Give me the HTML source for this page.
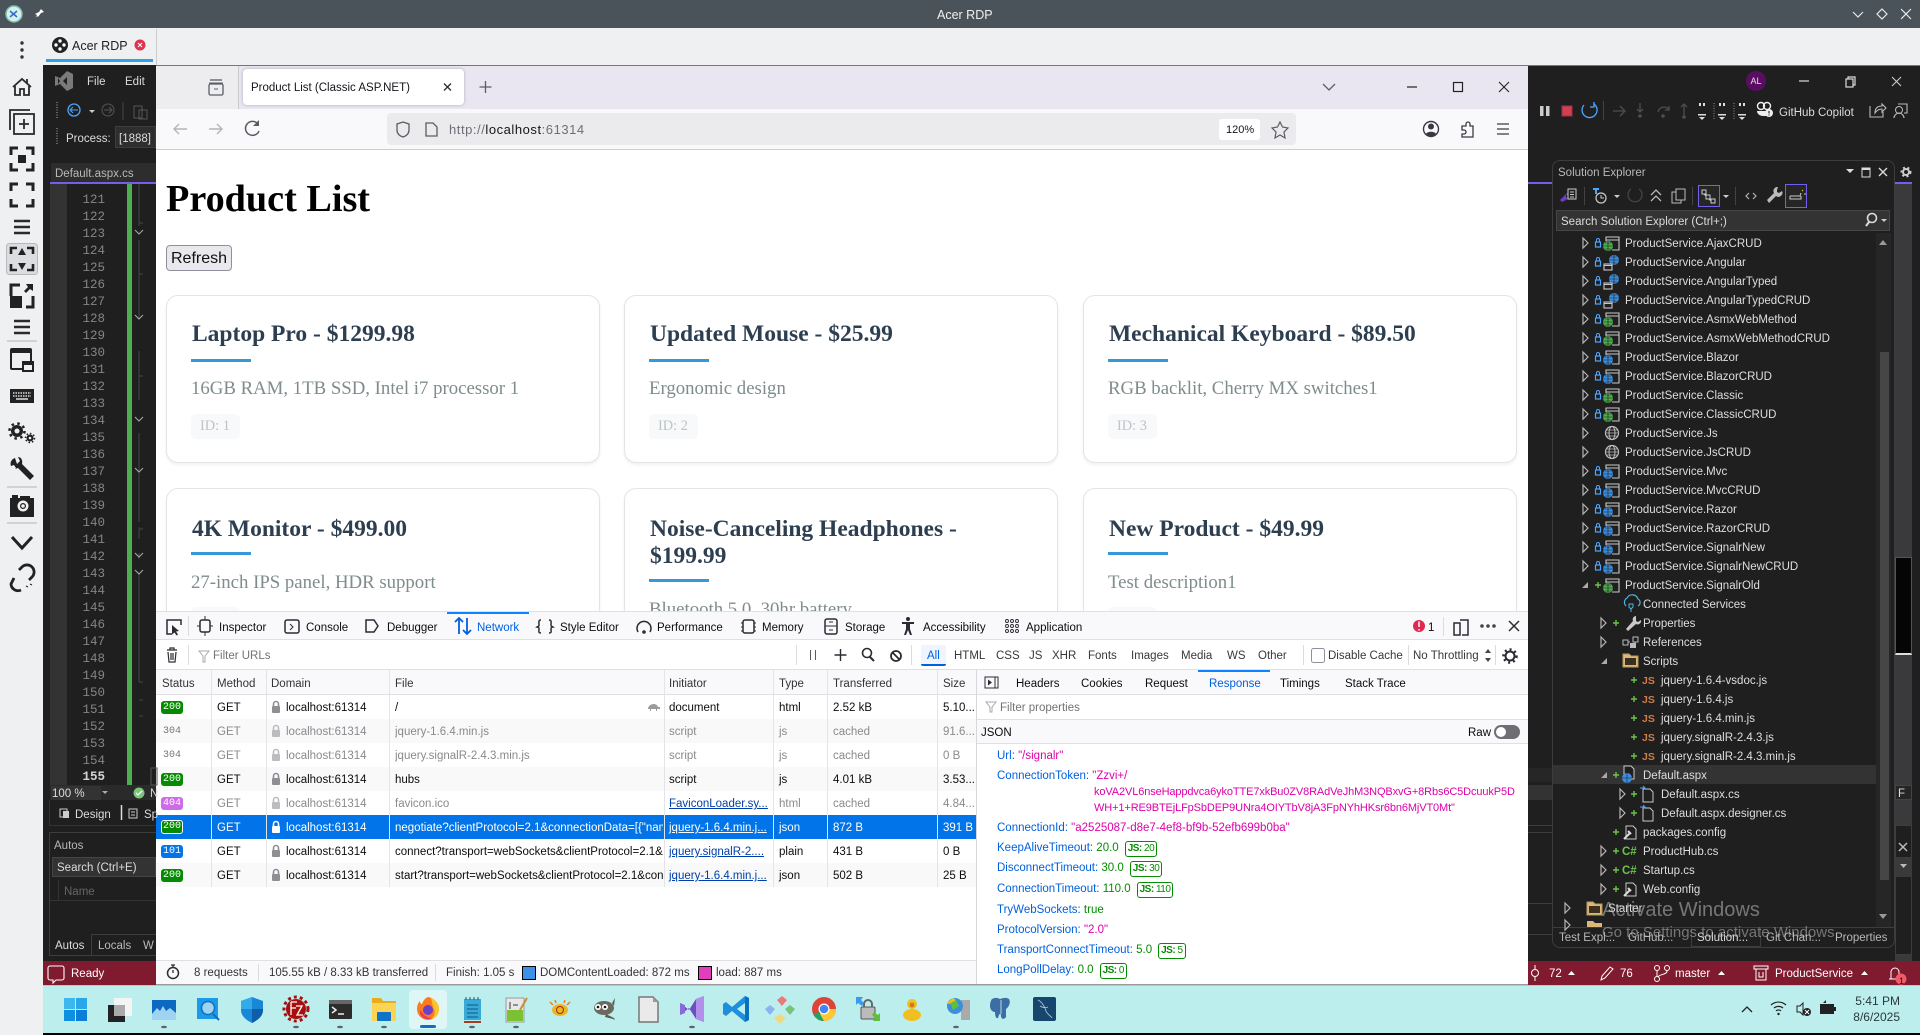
<!DOCTYPE html>
<html><head><meta charset="utf-8"><title>Acer RDP</title>
<style>
*{box-sizing:border-box}
html,body{margin:0;padding:0;width:1920px;height:1035px;overflow:hidden;background:#eff0f2;font-family:"Liberation Sans",sans-serif}
.b{position:absolute}
.t{position:absolute;white-space:nowrap;transform:translateY(-7px);line-height:16px;font-size:11.5px;color:#0c0c0d}
.d{color:#b8b8b8}.w{color:#dcdcdc}
.n{position:absolute;left:75px;width:30px;text-align:right;font:12.5px/17px "Liberation Mono",monospace;color:#858585;margin-top:1px}
.card{position:absolute;width:434px;background:#fff;border:1.2px solid #e4e4e4;border-radius:12px;box-shadow:0 2px 3px rgba(0,0,0,.06)}
.ct{position:absolute;left:25px;right:25px;font:bold 23.5px/26.6px "Liberation Serif",serif;color:#2c3e50}
.cb{position:absolute;left:24px;width:60px;height:3px;background:#3498db}
.cd{position:absolute;left:24px;font:18.8px/23px "Liberation Serif",serif;color:#7f8c8d;white-space:nowrap}
.ci{position:absolute;left:24px;width:49px;height:25px;background:#f8f9fa;border-radius:5px;font:14.4px/25px "Liberation Serif",serif;color:#bdc3c7;padding-left:9px}
.g{color:#8a8a8e}.u{color:#003eaa;text-decoration:underline}
.k{color:#0060df}.v{color:#dd00a9}.e{color:#058b00}
.st{position:absolute;left:161px;width:22px;height:13px;border-radius:3px;color:#fff;font:10px/13px "Liberation Mono",monospace;text-align:center}
.bd{display:inline-block;border:1px solid #058b00;border-radius:3px;padding:0 2px;font-size:10px;line-height:14px;margin-left:6px;color:#058b00;letter-spacing:-.5px}
.f{overflow:hidden;width:268px}
.r{color:#dedede}
</style></head><body>

<!-- window chrome -->
<div class="b" style="left:0;top:0;width:1920px;height:28px;background:#4a525a"></div>
<div class="b" style="left:43px;top:28px;width:1877px;height:37px;background:#eff0f2"></div>
<div class="b" style="left:46px;top:59px;width:107px;height:3px;background:#2ea3e6"></div>
<div class="b" style="left:156px;top:29px;width:1px;height:36px;background:#ccc"></div>

<!-- VS dark -->
<div class="b" style="left:43px;top:65px;width:1877px;height:921px;background:#1f1f1f"></div>
<div class="b" style="left:43px;top:961px;width:1877px;height:24px;background:#7f1a2f"></div>
<div class="b" style="left:156px;top:65px;width:1764px;height:1px;background:#777"></div>
<!-- left editor -->
<div class="b" style="left:51px;top:163px;width:105px;height:19px;background:#2d2d2d"></div>
<div class="b" style="left:50px;top:182px;width:106px;height:2px;background:#7160e8"></div>
<div class="b" style="left:50px;top:184px;width:17px;height:601px;background:#333"></div>
<div class="b" style="left:127px;top:184px;width:5px;height:601px;background:#4caf50"></div>
<div class="b" style="left:115px;top:126px;width:41px;height:22px;background:#2e2e2e;border:1px solid #3d3d3d"></div>
<div class="b" style="left:50px;top:785px;width:106px;height:15px;background:#2a2a2a"></div>
<div class="b" style="left:51px;top:786px;width:50px;height:14px;background:#333"></div>
<div class="b" style="left:49px;top:800px;width:108px;height:26px;border:1px solid #333;border-top:0"></div>
<div class="b" style="left:49px;top:832px;width:108px;height:124px;border:1px solid #3d3d3d"></div>
<div class="b" style="left:52px;top:857px;width:104px;height:20px;background:#333;border:1px solid #444"></div>
<div class="b" style="left:58px;top:880px;width:1px;height:20px;background:#333"></div>
<div class="b" style="left:50px;top:900px;width:106px;height:1px;background:#333"></div>
<div class="b" style="left:91px;top:934px;width:65px;height:1px;background:#3d3d3d"></div>
<div class="b" style="left:91px;top:934px;width:1px;height:21px;background:#3d3d3d"></div>

<!-- line numbers -->
<div class="n" style="top:191px">121</div><div class="n" style="top:208px">122</div><div class="n" style="top:225px">123</div><div class="n" style="top:242px">124</div><div class="n" style="top:259px">125</div><div class="n" style="top:276px">126</div><div class="n" style="top:293px">127</div><div class="n" style="top:310px">128</div><div class="n" style="top:327px">129</div><div class="n" style="top:344px">130</div><div class="n" style="top:361px">131</div><div class="n" style="top:378px">132</div><div class="n" style="top:395px">133</div><div class="n" style="top:412px">134</div><div class="n" style="top:429px">135</div><div class="n" style="top:446px">136</div><div class="n" style="top:463px">137</div><div class="n" style="top:480px">138</div><div class="n" style="top:497px">139</div><div class="n" style="top:514px">140</div><div class="n" style="top:531px">141</div><div class="n" style="top:548px">142</div><div class="n" style="top:565px">143</div><div class="n" style="top:582px">144</div><div class="n" style="top:599px">145</div><div class="n" style="top:616px">146</div><div class="n" style="top:633px">147</div><div class="n" style="top:650px">148</div><div class="n" style="top:667px">149</div><div class="n" style="top:684px">150</div><div class="n" style="top:701px">151</div><div class="n" style="top:718px">152</div><div class="n" style="top:735px">153</div><div class="n" style="top:752px">154</div><div class="n" style="top:768px;color:#d4d4d4;font-weight:bold">155</div>

<!-- firefox -->
<div class="b" style="left:156px;top:66px;width:1372px;height:43px;background:#e9e6f1"></div>
<div class="b" style="left:156px;top:66px;width:82px;height:43px;background:#ededf0"></div>
<div class="b" style="left:238px;top:66px;width:1px;height:43px;background:#c9c9cf"></div>
<div class="b" style="left:243px;top:69px;width:221px;height:36px;background:#fff;border-radius:4px;box-shadow:0 0 3px rgba(0,0,0,.25)"></div>
<div class="b" style="left:156px;top:109px;width:1372px;height:41px;background:#f9f9fb;border-bottom:1px solid #ccc"></div>
<div class="b" style="left:387px;top:113px;width:909px;height:32px;background:#ebebed;border-radius:4px"></div>
<div class="b" style="left:1219px;top:119px;width:41px;height:21px;background:#fff;border-radius:3px"></div>
<div class="b" style="left:156px;top:150px;width:1372px;height:835px;background:#fff"></div>

<div class="t" style="left:166px;top:199px;font:bold 38.2px/44px 'Liberation Serif',serif;color:#000;transform:translateY(-50%)">Product List</div>
<div class="b" style="left:166px;top:245px;width:66px;height:26px;background:#e9e9ed;border:1px solid #8f8f9d;border-radius:4px;font-size:16px;line-height:24px;padding-top:1px;text-align:center;color:#111">Refresh</div>

<div class="card" style="left:166px;top:295px;height:168px"><div class="ct" style="top:25px">Laptop Pro - $1299.98</div><div class="cb" style="top:63px"></div><div class="cd" style="top:81px">16GB RAM, 1TB SSD, Intel i7 processor 1</div><div class="ci" style="top:118px">ID: 1</div></div>
<div class="card" style="left:624px;top:295px;height:168px"><div class="ct" style="top:25px">Updated Mouse - $25.99</div><div class="cb" style="top:63px"></div><div class="cd" style="top:81px">Ergonomic design</div><div class="ci" style="top:118px">ID: 2</div></div>
<div class="card" style="left:1083px;top:295px;height:168px"><div class="ct" style="top:25px">Mechanical Keyboard - $89.50</div><div class="cb" style="top:63px"></div><div class="cd" style="top:81px">RGB backlit, Cherry MX switches1</div><div class="ci" style="top:118px">ID: 3</div></div>
<div class="card" style="left:166px;top:488px;height:168px"><div class="ct" style="top:27px">4K Monitor - $499.00</div><div class="cb" style="top:63px"></div><div class="cd" style="top:82px">27-inch IPS panel, HDR support</div><div class="ci" style="top:118px">ID: 4</div></div>
<div class="card" style="left:624px;top:488px;height:200px"><div class="ct" style="top:27px">Noise-Canceling Headphones - $199.99</div><div class="cb" style="top:90px"></div><div class="cd" style="top:109px">Bluetooth 5.0, 30hr battery</div></div>
<div class="card" style="left:1083px;top:488px;height:168px"><div class="ct" style="top:27px">New Product - $49.99</div><div class="cb" style="top:63px"></div><div class="cd" style="top:82px">Test description1</div><div class="ci" style="top:118px">ID: 6</div></div>

<!-- devtools backgrounds -->
<div class="b" style="left:156px;top:611px;width:1372px;height:374px;background:#fff;border-top:1px solid #e0e0e2"></div>
<div class="b" style="left:156px;top:612px;width:1372px;height:28px;background:#f9f9fb;border-bottom:1px solid #e0e0e2"></div>
<div class="b" style="left:156px;top:640px;width:1372px;height:30px;background:#fff;border-bottom:1px solid #e0e0e2"></div>
<div class="b" style="left:156px;top:670px;width:1372px;height:25px;background:#f9f9fb;border-bottom:1px solid #e0e0e2"></div>
<div class="b" style="left:447px;top:612px;width:82px;height:2px;background:#0a84ff"></div>
<div class="b" style="left:921px;top:645px;width:25px;height:21px;background:#eef5fe;border-bottom:2px solid #0060df;border-radius:2px"></div>
<div class="b" style="left:1198px;top:670px;width:72px;height:2px;background:#0a84ff"></div>
<!-- table rows -->
<div class="b" style="left:156px;top:719px;width:820px;height:24px;background:#f9f9fa"></div>
<div class="b" style="left:156px;top:767px;width:820px;height:24px;background:#f9f9fa"></div>
<div class="b" style="left:156px;top:863px;width:820px;height:24px;background:#f9f9fa"></div>
<div class="b" style="left:156px;top:815px;width:820px;height:24px;background:#0074e8"></div>
<div class="b" style="left:211px;top:670px;width:1px;height:217px;background:#e4e4e6"></div>
<div class="b" style="left:266px;top:670px;width:1px;height:217px;background:#e4e4e6"></div>
<div class="b" style="left:389px;top:670px;width:1px;height:217px;background:#e4e4e6"></div>
<div class="b" style="left:664px;top:670px;width:1px;height:217px;background:#e4e4e6"></div>
<div class="b" style="left:773px;top:670px;width:1px;height:217px;background:#e4e4e6"></div>
<div class="b" style="left:827px;top:670px;width:1px;height:217px;background:#e4e4e6"></div>
<div class="b" style="left:937px;top:670px;width:1px;height:217px;background:#e4e4e6"></div>
<div class="b" style="left:976px;top:670px;width:1px;height:315px;background:#d8d8da"></div>
<div class="b" style="left:977px;top:719px;width:551px;height:25px;background:#f9f9fb;border-top:1px solid #e0e0e2;border-bottom:1px solid #e0e0e2"></div>
<div class="b" style="left:156px;top:960px;width:820px;height:25px;background:#f9f9fb;border-top:1px solid #e0e0e2"></div>
<div class="b" style="left:156px;top:984px;width:1372px;height:2px;background:#999"></div>
<div class="b" style="left:522px;top:966px;width:14px;height:14px;background:#3c90e8;border:1px solid #000"></div>
<div class="b" style="left:698px;top:966px;width:14px;height:14px;background:#e23dbb;border:1px solid #000"></div>

<!-- solution explorer backgrounds -->
<div class="b" style="left:1528px;top:182px;width:24px;height:2px;background:#7160e8"></div>
<div class="b" style="left:1895px;top:182px;width:17px;height:2px;background:#7160e8"></div>
<div class="b" style="left:1895px;top:184px;width:17px;height:777px;background:#3a3a3d"></div>
<div class="b" style="left:1895px;top:557px;width:17px;height:98px;background:#050505;border:1px solid #555;border-bottom:2px solid #ddd"></div>
<div class="b" style="left:1528px;top:768px;width:24px;height:14px;background:#262626"></div>
<div class="b" style="left:1528px;top:785px;width:24px;height:15px;background:#333"></div>
<div class="b" style="left:1895px;top:785px;width:17px;height:15px;background:#252525;border:1px solid #444"></div>
<div class="b" style="left:1528px;top:825px;width:24px;height:1px;background:#3d3d3d"></div>
<div class="b" style="left:1528px;top:832px;width:24px;height:1px;background:#3d3d3d"></div>
<div class="b" style="left:1528px;top:903px;width:24px;height:1px;background:#3d3d3d"></div>
<div class="b" style="left:1528px;top:934px;width:24px;height:1px;background:#3d3d3d"></div>
<div class="b" style="left:1895px;top:825px;width:17px;height:130px;background:#1f1f1f;border:1px solid #3d3d3d"></div>
<div class="b" style="left:1895px;top:857px;width:17px;height:20px;background:#3a3a3a"></div>
<div class="b" style="left:1552px;top:160px;width:343px;height:788px;background:#1f1f1f;border:1px solid #3d3d3d;border-radius:8px"></div>
<div class="b" style="left:1556px;top:210px;width:334px;height:21px;background:#333;border:1px solid #454545"></div>
<div class="b" style="left:1553px;top:765px;width:323px;height:19px;background:#333"></div>
<div class="b" style="left:1876px;top:233px;width:15px;height:694px;background:#262626"></div>
<div class="b" style="left:1880px;top:352px;width:9px;height:528px;background:#464646"></div>
<div class="b" style="left:1698px;top:185px;width:22px;height:22px;border:1px solid #7160e8;background:#262626"></div>
<div class="b" style="left:1785px;top:184px;width:22px;height:24px;border:1px solid #7160e8;background:#262626"></div>
<div class="b" style="left:1553px;top:927px;width:341px;height:1px;background:#3d3d3d"></div>
<div class="b" style="left:1691px;top:927px;width:70px;height:20px;border:1px solid #3d3d3d;background:#1f1f1f"></div>

<!-- taskbar -->
<div class="b" style="left:43px;top:985px;width:1877px;height:48px;background:#bdeeee;border-top:1px solid #a8cfd0"></div>
<div class="b" style="left:43px;top:1033px;width:1877px;height:2px;background:#000"></div>
<div class="b" style="left:409px;top:990px;width:38px;height:39px;background:#dff6f6;border-radius:4px"></div>

<!-- ICON LAYER -->
<svg class="b" style="left:0;top:0" width="1920" height="1035" viewBox="0 0 1920 1035">
<defs>
<g id="tr"><path d="M-2-5 3 0-2 5Z" fill="none" stroke="#b5b5b5" stroke-width="1.200"/></g>
<g id="td"><path d="M3-3V3H-3Z" fill="#aaa"/></g>
<g id="lk"><rect x="-2.500" y="-1" width="5" height="5" fill="none" stroke="#4da6ff" stroke-width="1.200"/><path d="M-1.500-1V-3a1.500 1.500 0 0 1 3 0V-1" fill="none" stroke="#4da6ff"/></g>
<g id="pl"><path d="M-3 0H3M0-3V3" stroke="#6cc24a" stroke-width="1.400"/></g>
<g id="win"><path d="M-5-2V-6H8V7H1M-5-3H8" fill="none" stroke="#c8c8c8" stroke-width="1.100"/></g>
<g id="pg"><use href="#win"/><circle cx="-3" cy="3" r="5" fill="#4fae4f"/><path d="M-8 3H2M-3-2V8M-6 0H0M-6 6H0" stroke="#1f1f1f" stroke-width=".6"/></g>
<g id="pb"><use href="#win"/><circle cx="-3" cy="3" r="5" fill="#3c8fe0"/><path d="M-8 3H2M-3-2V8M-6 0H0M-6 6H0" stroke="#1f1f1f" stroke-width=".6"/></g>
<g id="ang"><circle cx="3" cy="-2" r="5" fill="#3c8fe0"/><path d="M-2-2H8M3-7V3M0-5H6M0 1H6" stroke="#1f1f1f" stroke-width=".6"/><rect x="-7" y="2" width="8" height="6" fill="#1f1f1f" stroke="#c8c8c8" stroke-width="1.100"/><path d="M-7 3.500H1" stroke="#c8c8c8"/></g>
<g id="glb"><circle r="6.500" fill="none" stroke="#bbb" stroke-width="1.200"/><ellipse rx="3" ry="6.500" fill="none" stroke="#bbb"/><path d="M-6.500 0H6.500M-5.500-3H5.500M-5.500 3H5.500" stroke="#bbb" stroke-width=".8"/></g>
<g id="doc"><path d="M-5-6H2L5-3V7H-5Z" fill="#1f1f1f" stroke="#c8c8c8"/></g>
<g id="wdoc"><use href="#doc" x="2"/><path d="M-5 7 1 1M-1-1l3 3" stroke="#ddd" stroke-width="2"/></g>
<g id="lkg"><rect x="-4" y="-1" width="8" height="7" rx="1" fill="#8e8e93"/><path d="M-2.500-1V-3a2.500 2.500 0 0 1 5 0V-1" fill="none" stroke="#8e8e93" stroke-width="1.600"/></g>
<g id="lkl"><rect x="-4" y="-1" width="8" height="7" rx="1" fill="#bcbcc0"/><path d="M-2.500-1V-3a2.500 2.500 0 0 1 5 0V-1" fill="none" stroke="#bcbcc0" stroke-width="1.600"/></g>
<g id="ham"><path d="M-8-6H8M-8 0H8M-8 6H8" stroke="#2a2a2a" stroke-width="2.400"/></g>
</defs>

<!-- title bar icons -->
<circle cx="14" cy="14" r="8" fill="#d8f0ea" stroke="#7fbfb0" stroke-width="1.500"/><path d="M10 11l7 6M17 11l-7 6" stroke="#2a6fd0" stroke-width="1.500"/>
<path d="M41 9l3 3-3 1-3 4-1-1-2 2 2-3-2-1 4-2z" fill="#fff"/>
<path d="M1853 12l5 5 5-5" fill="none" stroke="#e8e8e8" stroke-width="1.200"/><path d="M1882 9l5 5-5 5-5-5z" fill="none" stroke="#e8e8e8" stroke-width="1.200"/><path d="M1901 9l10 10M1911 9l-10 10" stroke="#e8e8e8" stroke-width="1.200"/>

<!-- sidebar -->
<g fill="#333"><circle cx="22" cy="43" r="1.700"/><circle cx="22" cy="50" r="1.700"/><circle cx="22" cy="57" r="1.700"/></g>
<g fill="none" stroke="#2a2a2a" stroke-width="1.800">
<path d="M13 87 22 79 31 87M15 86v9h5v-6h4v6h5v-9M27 79v4"/>
<path d="M10 130V110H30"/><rect x="14" y="114" width="20" height="20"/><path d="M24 119v10M19 124h10"/>
</g>
<g fill="none" stroke="#222" stroke-width="3">
<path d="M11 155V148H18M26 148H33V155M33 163V170H26M18 170H11V163"/>
<path d="M11 191V184H18M26 184H33V191M33 199V206H26M18 206H11V199"/></g>
<rect x="18" y="155" width="8" height="8" fill="#222"/>
<use href="#ham" x="22" y="227"/>
<rect x="6.500" y="243.500" width="31" height="31" rx="3" fill="#dcdde0" stroke="#b8b8bc"/>
<path d="M11 254V248H17M27 248H33V254M33 264V270H27M17 270H11V264" fill="none" stroke="#222" stroke-width="2.600"/><path d="M22 248l4 7h-8zM22 270l4-7h-8z" fill="#222"/>
<path d="M11 296V285H20M33 296V307H26" fill="none" stroke="#222" stroke-width="3"/><rect x="10" y="296" width="12" height="12" fill="#222"/><path d="M26 284h7v7l-3-2-4 4-2-2 4-4z" fill="#222"/>
<use href="#ham" x="22" y="327"/>
<path d="M7 341H37" stroke="#b5b5b8"/>
<rect x="10" y="348" width="22" height="22" rx="2" fill="#222"/><rect x="12" y="353" width="18" height="15" fill="#eff0f2"/><rect x="22" y="361" width="12" height="11" fill="#222"/><rect x="24" y="365" width="8" height="5" fill="#eff0f2"/>
<rect x="10" y="389" width="24" height="14" fill="#222"/><path d="M13 393H31M13 396H31" stroke="#ddd" stroke-width="1.500" stroke-dasharray="1.500 1"/><path d="M16 399H28" stroke="#ddd" stroke-width="1.500"/>
<circle cx="17" cy="431" r="6" fill="#222"/><circle cx="17" cy="431" r="7.500" fill="none" stroke="#222" stroke-width="2.500" stroke-dasharray="2.500 3.400"/><circle cx="17" cy="431" r="2.500" fill="#eff0f2"/>
<circle cx="30" cy="438" r="3.500" fill="#222"/><circle cx="30" cy="438" r="4.500" fill="none" stroke="#222" stroke-width="1.500" stroke-dasharray="1.500 2"/><circle cx="30" cy="438" r="1.300" fill="#eff0f2"/>
<path d="M15 458a6 6 0 0 0-4 8l3-1 2 3-1 1 3-1 12 12 4-4-12-12c1-4-1-7-4-7l2 4-3 3z" fill="#222"/>
<path d="M7 487H37M7 523H37" stroke="#b5b5b8"/>
<rect x="10" y="498" width="24" height="19" fill="#222"/><rect x="12" y="495" width="6" height="3" fill="#222"/><rect x="20" y="496" width="10" height="3" fill="#222"/><circle cx="23" cy="506" r="5.500" fill="#eff0f2"/><circle cx="23" cy="506" r="3" fill="#222"/><circle cx="23" cy="506" r="1.800" fill="#eff0f2"/>
<path d="M12 537l10 11 10-11" fill="none" stroke="#222" stroke-width="3"/>
<path d="M19 570l3-3a7 7 0 0 1 10 10l-3 3M21 590a7 7 0 0 1-10-6l3-6" fill="none" stroke="#222" stroke-width="2.800"/><path d="M26 586l2 1M30 584l2 1" stroke="#222"/>
<!-- tab acer -->
<circle cx="60" cy="45" r="8" fill="#222"/><g fill="#fff"><circle cx="60" cy="41" r="1.700"/><circle cx="60" cy="49" r="1.700"/><circle cx="56" cy="45" r="1.700"/><circle cx="64" cy="45" r="1.700"/></g>
<circle cx="140" cy="45" r="5.500" fill="#e0334c"/><path d="M138 43l4 4M142 43l-4 4" stroke="#fff"/>

<!-- VS left top -->
<path d="M55 86V76l5 2 7-7 6 3v14l-6 3-7-7zM58 78v6l2-3zM67 77l-4 4 4 4z" fill="#7a7a7a"/>
<path d="M57 102V118" stroke="#666" stroke-width="2" stroke-dasharray="1 1.500"/><path d="M57 128V145" stroke="#666" stroke-width="2" stroke-dasharray="1 1.500"/>
<circle cx="74" cy="110" r="6" fill="none" stroke="#4da6ff" stroke-width="1.300"/><path d="M78 110h-7M73 107l-3 3 3 3" fill="none" stroke="#4da6ff"/>
<path d="M89 110h6l-3 3z" fill="#ccc"/><circle cx="108" cy="110" r="6" fill="none" stroke="#555"/><path d="M104 110h7M109 107l3 3-3 3" fill="none" stroke="#555"/>
<path d="M123 102V120" stroke="#444"/><rect x="134" y="106" width="8" height="12" fill="none" stroke="#555"/><rect x="139" y="110" width="8" height="9" fill="none" stroke="#555"/>
<!-- editor gutter -->
<path d="M139 184V226M139 240V319M139 351V400M139 433V522M139 527V539M139 553V559M139 573V682" stroke="#444"/>
<path d="M139 223h4M139 274h4M139 376h4M139 529h4M139 682h4M139 700h4M139 716h4" stroke="#444"/>
<g fill="none" stroke="#aaa" stroke-width="1"><path d="M135 230l4 4 4-4M135 315l4 4 4-4M135 417l4 4 4-4M135 468l4 4 4-4M135 553l4 4 4-4M135 570l4 4 4-4"/></g>
<rect x="151" y="768" width="6" height="17" fill="none" stroke="#555"/>
<path d="M102 791h6l-3 3z" fill="#aaa"/><circle cx="139" cy="793" r="5.500" fill="#7bc67b"/><path d="M136 793l2 2 4-4" fill="none" stroke="#fff" stroke-width="1.300"/>
<rect x="60" y="809" width="7" height="8" fill="none" stroke="#ccc"/><rect x="63" y="811" width="6" height="7" fill="#ccc"/><path d="M121.500 805V820" stroke="#ddd" stroke-width="1.500"/><rect x="129" y="809" width="8" height="9" fill="none" stroke="#ccc"/><path d="M131 812h4M131 815h4" stroke="#ccc"/>
<path d="M48 968a2 2 0 0 1 2-2h12a2 2 0 0 1 2 2v10a2 2 0 0 1-2 2h-6l-3 3v-3h-3a2 2 0 0 1-2-2z" fill="none" stroke="#fff" stroke-width="1.100"/>

<!-- firefox chrome icons -->
<rect x="209" y="84" width="14" height="11" rx="1.500" fill="none" stroke="#5b5b66" stroke-width="1.300"/><path d="M210 80h12" stroke="#5b5b66" stroke-width="1.300"/><path d="M209 83h14M214 89h4" stroke="#5b5b66"/>
<path d="M444 83.500l7 7M451 83.500l-7 7" stroke="#2b2b33" stroke-width="1.300"/>
<path d="M485.500 81v12M479.500 87h12" stroke="#5b5b66" stroke-width="1.300"/>
<path d="M1323 84l6 6 6-6" fill="none" stroke="#5b5b66" stroke-width="1.300"/>
<path d="M1407 87h10" stroke="#222" stroke-width="1.200"/><rect x="1453.500" y="82.500" width="9" height="9" fill="none" stroke="#222" stroke-width="1.200"/><path d="M1499 82l10 10M1509 82l-10 10" stroke="#222" stroke-width="1.100"/>
<path d="M187 129h-13M179 124l-5 5 5 5" fill="none" stroke="#b4b4ba" stroke-width="1.400"/>
<path d="M209 129h13M217 124l5 5-5 5" fill="none" stroke="#b4b4ba" stroke-width="1.400"/>
<path d="M258 124a7 7 0 1 0 1 7" fill="none" stroke="#5b5b66" stroke-width="1.500"/><path d="M259 120v6h-6z" fill="#5b5b66"/>
<path d="M403 122l6 2v6c0 4-3 6-6 7-3-1-6-3-6-7v-6z" fill="none" stroke="#5b5b66" stroke-width="1.300"/>
<path d="M426 123h7l4 4v9h-11z" fill="none" stroke="#5b5b66" stroke-width="1.300"/>
<path d="M1280 122l2.500 5 5.500 1-4 4 1 6-5-3-5 3 1-6-4-4 5.500-1z" fill="none" stroke="#5b5b66" stroke-width="1.200"/>
<circle cx="1431" cy="129" r="7.500" fill="none" stroke="#3a3a44" stroke-width="1.400"/><circle cx="1431" cy="126.500" r="3" fill="#3a3a44"/><path d="M1426 134c1-3 9-3 10 0l-2 2h-6z" fill="#3a3a44"/>
<path d="M1462 126h4v-2a2 2 0 0 1 4 0v2h3v11h-11v-3h2a2 2 0 0 0 0-4h-2z" fill="none" stroke="#3a3a44" stroke-width="1.300"/>
<path d="M1497 124h12M1497 129h12M1497 134h12" stroke="#3a3a44" stroke-width="1.200"/>

<!-- devtools tabs -->
<g fill="none" stroke="#2b2b33" stroke-width="1.500">
<path d="M172 634h-5v-14h14v5"/><rect x="200" y="620" width="10" height="12" rx="2"/><path d="M205 616v4M205 632v4M197 626h3M210 626h3" stroke-width="1"/>
<rect x="285" y="620" width="14" height="13" rx="2"/><path d="M290 624l3 3-3 3" stroke-width="1"/>
<path d="M366 620h8l4 6-4 6h-8z"/>
<path d="M541 620c-3 0-2 3-2 5s-1 1-2 2c1 0 2 0 2 2s-1 4 2 4M549 620c3 0 2 3 2 5s1 1 2 2c-1 0-2 0-2 2s1 4-2 4"/>
<path d="M638 632a7 7 0 1 1 12 0"/><rect x="743" y="620" width="11" height="13" rx="2"/><path d="M741 623h2M741 627h2M741 631h2M754 623h2M754 627h2M754 631h2" stroke-width="1"/>
<rect x="825" y="619" width="12" height="15" rx="2"/><path d="M825 626h12M829 622h4M829 630h4" stroke-width="1"/>
</g>
<path d="M172 625l7 6-3 .5 2 3-1.500 1-2-3-2.500 2z" fill="#2b2b33"/>
<circle cx="644" cy="632" r="1.800" fill="#2b2b33"/>
<circle cx="908" cy="619" r="2" fill="#2b2b33"/><path d="M902 622h12v2h-4v5l2 6h-2l-2-5-2 5h-2l2-6v-5h-4z" fill="#2b2b33"/>
<g fill="none" stroke="#2b2b33" stroke-width=".9"><circle cx="1007" cy="621" r="1.500"/><circle cx="1012" cy="621" r="1.500"/><circle cx="1017" cy="621" r="1.500"/><circle cx="1007" cy="626" r="1.500"/><circle cx="1012" cy="626" r="1.500"/><circle cx="1017" cy="626" r="1.500"/><circle cx="1007" cy="631" r="1.500"/><circle cx="1012" cy="631" r="1.500"/><circle cx="1017" cy="631" r="1.500"/></g>
<path d="M459 634v-16M455 622l4-4 4 4M467 618v16M463 630l4 4 4-4" fill="none" stroke="#0060df" stroke-width="1.800"/>
<path d="M188.500 616V636M188.500 645V665M796.500 645V665M911.500 645V665M1303.500 645V665M1408.500 645V665M1495.500 645V665M1443.500 617V636" stroke="#dcdcde"/>
<circle cx="1419" cy="626" r="6" fill="#e22850"/><path d="M1419 621.500v5.500M1419 629v1.500" stroke="#fff" stroke-width="1.500"/>
<path d="M1460 620h8v15h-6M1454 623h6v12h-6z" fill="none" stroke="#2b2b33" stroke-width="1.500"/>
<g fill="#444"><circle cx="1482" cy="626" r="1.800"/><circle cx="1488" cy="626" r="1.800"/><circle cx="1494" cy="626" r="1.800"/></g>
<path d="M1509 621l10 10M1519 621l-10 10" stroke="#2b2b33" stroke-width="1.500"/>
<path d="M167 650h10M170 650v-2h4v2M168 652l1 10h6l1-10M171 653v7M173 653v7" fill="none" stroke="#2b2b33" stroke-width="1.200"/>
<path d="M199 651h10l-4 5v6h-2v-6z" fill="none" stroke="#a8a8ad"/>
<path d="M810.500 650v10M815.500 650v10" stroke="#5b5b66"/>
<path d="M840.500 649v12M834.500 655h12" stroke="#2b2b33" stroke-width="1.400"/>
<circle cx="867" cy="653" r="4.500" fill="none" stroke="#2b2b33" stroke-width="1.600"/><path d="M870 657l4 4" stroke="#2b2b33" stroke-width="2"/>
<circle cx="896" cy="656" r="5" fill="none" stroke="#2b2b33" stroke-width="1.800"/><path d="M892.500 652.500l7 7" stroke="#2b2b33" stroke-width="1.800"/>
<rect x="1311.500" y="648.500" width="13" height="14" rx="2" fill="#fff" stroke="#8f8f9d"/>
<circle cx="1510" cy="656" r="4.500" fill="none" stroke="#2b2b33" stroke-width="2"/><circle cx="1510" cy="656" r="6.500" fill="none" stroke="#2b2b33" stroke-width="2.500" stroke-dasharray="2 3"/>
<rect x="985" y="677" width="13" height="11" fill="none" stroke="#2b2b33"/><path d="M995 677v11" stroke="#2b2b33"/><path d="M988 679.500l4 3-4 3z" fill="#2b2b33"/>
<path d="M986 702h10l-4 5v5h-2v-5z" fill="none" stroke="#a8a8ad"/>
<path d="M648 709c0-3 3-5 6-5 2 0 4 2 4 3h2v2h-3v2h-1v-2h-5v2h-1v-2z" fill="#9a9a9f"/>
<!-- locks -->
<use href="#lkg" x="276" y="707"/><use href="#lkl" x="276" y="731"/><use href="#lkl" x="276" y="755"/><use href="#lkg" x="276" y="779"/><use href="#lkl" x="276" y="803"/><g><rect x="272" y="826" width="8" height="7" rx="1" fill="#fff"/><path d="M273.500 826v-2a2.500 2.500 0 0 1 5 0v2" fill="none" stroke="#fff" stroke-width="1.600"/></g><use href="#lkg" x="276" y="851"/><use href="#lkg" x="276" y="875"/>
<circle cx="173" cy="973" r="5.500" fill="none" stroke="#2b2b33" stroke-width="1.500"/><path d="M173 973v-3M171 965h4M173 965v2" stroke="#2b2b33" stroke-width="1.300"/>
<path d="M258.500 964V981M435.500 964V981" stroke="#dcdcde"/>
<rect x="1494" y="725" width="26" height="14" rx="7" fill="#6e6e73"/><circle cx="1501" cy="732" r="5" fill="#fff"/>

<!-- VS right top -->
<rect x="1746" y="71" width="20" height="20" rx="10" fill="#5a0e62"/>
<path d="M1799 81h10" stroke="#ddd" stroke-width="1.200"/><rect x="1846" y="79" width="7" height="8" fill="none" stroke="#ddd" stroke-width="1.200"/><path d="M1848 79v-2h7v8h-2" fill="none" stroke="#ddd" stroke-width="1.200"/><path d="M1892 77l9 9M1901 77l-9 9" stroke="#ccc" stroke-width="1.100"/>
<rect x="1540" y="106" width="3.500" height="10" fill="#ccc"/><rect x="1546" y="106" width="3.500" height="10" fill="#ccc"/>
<rect x="1562" y="106" width="10" height="10" fill="#d13f55" stroke="#a0303f"/>
<path d="M1594 104a7.500 7.500 0 1 1-10 1" fill="none" stroke="#4da6ff" stroke-width="1.300"/><path d="M1594 102v5h-4" fill="none" stroke="#4da6ff" stroke-width="1.300"/>
<path d="M1603.500 101V120" stroke="#444"/>
<g fill="none" stroke="#4e4e4e" stroke-width="1.300"><path d="M1613 111h12M1620 106l5 5-5 5"/><path d="M1640 103v9M1637 109l3 3 3-3"/><path d="M1658 112a6 6 0 0 1 11-2M1669 106v4h-4"/><path d="M1684 115v-11M1681 107l3-3 3 3"/></g>
<g fill="#4e4e4e"><circle cx="1640" cy="116" r="1.800"/><circle cx="1663" cy="116" r="1.800"/><circle cx="1684" cy="117" r="1.800"/></g>
<g fill="#ddd"><path d="M1699 103h2v3h-2zM1703 103h2v3h-2zM1719 103h2v3h-2zM1723 103h2v3h-2zM1739 103h2v3h-2zM1743 103h2v3h-2zM1698 114h8v1.500h-8zM1718 114h8v1.500h-8zM1738 114h8v1.500h-8z"/><path d="M1699 117h6l-3 3zM1719 117h6l-3 3zM1739 117h6l-3 3z"/></g>
<path d="M1714 103V120M1734 103V120" stroke="#555" stroke-width="2" stroke-dasharray="1 1.500"/>
<circle cx="1761" cy="106" r="3.500" fill="none" stroke="#eee" stroke-width="1.400"/><circle cx="1767" cy="106" r="3.500" fill="none" stroke="#eee" stroke-width="1.400"/><path d="M1757 111c0 3 3 5 6 5h3v-5z" fill="#eee"/><circle cx="1769" cy="113" r="4" fill="#eee"/><path d="M1769 111v2.500M1769 114.500v1" stroke="#1f1f1f" stroke-width="1.100"/>
<path d="M1870 106v11h13v-5M1875 113c0-5 3-7 7-7v-2l4 4-4 4v-3c-3 0-5 1-7 4z" fill="none" stroke="#bbb" stroke-width="1.100"/>
<circle cx="1899" cy="110" r="3.500" fill="none" stroke="#bbb"/><path d="M1894 118c0-3 3-5 5-5s5 2 5 5M1898 104h9v9h-3" fill="none" stroke="#bbb" stroke-width="1.100"/>

<!-- solution explorer chrome -->
<path d="M1846 169h8l-4 4z" fill="#ddd"/><rect x="1862" y="168" width="8" height="9" fill="none" stroke="#ddd"/><path d="M1862 169h8" stroke="#ddd" stroke-width="2"/><path d="M1879 168l8 8M1887 168l-8 8" stroke="#ddd" stroke-width="1.300"/>
<circle cx="1906" cy="172" r="3" fill="none" stroke="#ccc" stroke-width="2"/><circle cx="1906" cy="172" r="4.500" fill="none" stroke="#ccc" stroke-width="2" stroke-dasharray="2 2.500"/>
<path d="M1562 198l-2 2 2 2 4-2 3-3-3-3zM1566 194l4-3v9l-4-3" fill="#6d3fbf"/><rect x="1568" y="189" width="8" height="10" fill="#1f1f1f" stroke="#ccc"/><path d="M1570 192h4M1570 194.500h4M1570 197h4" stroke="#ccc"/>
<path d="M1584.500 187V205M1692.500 187V205M1735.500 187V205" stroke="#444"/>
<path d="M1593 188h6v2h-2v4h-2v-4h-2z" fill="#4da6ff"/><circle cx="1601" cy="198" r="5" fill="none" stroke="#ccc" stroke-width="1.200"/><path d="M1601 195v3h3" stroke="#ccc" fill="none"/>
<path d="M1614 195h6l-3 3zM1723 195h6l-3 3z" fill="#ccc"/>
<path d="M1639 189a7 7 0 1 1-8 0" fill="none" stroke="#444" stroke-width="1.300"/>
<path d="M1651 195l5-5 5 5M1651 201l5-5 5 5" fill="none" stroke="#bbb" stroke-width="1.300"/>
<rect x="1672" y="192" width="9" height="11" fill="none" stroke="#bbb"/><rect x="1676" y="189" width="9" height="11" fill="#1f1f1f" stroke="#bbb"/>
<rect x="1702" y="190" width="4" height="4" fill="none" stroke="#ccc"/><rect x="1706" y="195" width="4" height="4" fill="none" stroke="#ccc"/><rect x="1711" y="199" width="4" height="4" fill="none" stroke="#ccc"/><path d="M1704 194l2 2M1709 199l2 2" stroke="#ccc"/>
<path d="M1749 193l-3 3 3 3M1753 193l3 3-3 3" fill="none" stroke="#bbb" stroke-width="1.100"/>
<path d="M1778 187a4 4 0 0 0-4 6l-7 7 2 3 7-7a4 4 0 0 0 6-5l-3 2-2-1v-2z" fill="#bbb"/>
<path d="M1790 196h10l1-3M1790 196v3h11v-3" fill="none" stroke="#ccc"/><path d="M1802 191l1-1M1804 194h2" stroke="#e8c84a"/>
<circle cx="1872" cy="218" r="4.500" fill="none" stroke="#ddd" stroke-width="1.600"/><path d="M1869 222l-3 4" stroke="#ddd" stroke-width="2"/><path d="M1881 219h6l-3 3z" fill="#ccc"/>
<path d="M1879 245l4-5 4 5z" fill="#999"/><path d="M1879 914l4 5 4-5z" fill="#999"/>
<path d="M1899 843l8 8M1907 843l-8 8" stroke="#bbb" stroke-width="1.500"/><path d="M1900 864h7l-3.500 4z" fill="#bbb"/>

<!-- tree -->
<g>
<use href="#tr" x="1585" y="243"/><use href="#lk" x="1598" y="243"/><use href="#pg" x="1611" y="243"/>
<use href="#tr" x="1585" y="262"/><use href="#lk" x="1598" y="262"/><use href="#ang" x="1611" y="262"/>
<use href="#tr" x="1585" y="281"/><use href="#lk" x="1598" y="281"/><use href="#ang" x="1611" y="281"/>
<use href="#tr" x="1585" y="300"/><use href="#lk" x="1598" y="300"/><use href="#ang" x="1611" y="300"/>
<use href="#tr" x="1585" y="319"/><use href="#lk" x="1598" y="319"/><use href="#pg" x="1611" y="319"/>
<use href="#tr" x="1585" y="338"/><use href="#lk" x="1598" y="338"/><use href="#pg" x="1611" y="338"/>
<use href="#tr" x="1585" y="357"/><use href="#lk" x="1598" y="357"/><use href="#pb" x="1611" y="357"/>
<use href="#tr" x="1585" y="376"/><use href="#lk" x="1598" y="376"/><use href="#pb" x="1611" y="376"/>
<use href="#tr" x="1585" y="395"/><use href="#lk" x="1598" y="395"/><use href="#pg" x="1611" y="395"/>
<use href="#tr" x="1585" y="414"/><use href="#lk" x="1598" y="414"/><use href="#pg" x="1611" y="414"/>
<use href="#tr" x="1585" y="433"/><use href="#glb" x="1612" y="433"/>
<use href="#tr" x="1585" y="452"/><use href="#glb" x="1612" y="452"/>
<use href="#tr" x="1585" y="471"/><use href="#lk" x="1598" y="471"/><use href="#pb" x="1611" y="471"/>
<use href="#tr" x="1585" y="490"/><use href="#lk" x="1598" y="490"/><use href="#pb" x="1611" y="490"/>
<use href="#tr" x="1585" y="509"/><use href="#lk" x="1598" y="509"/><use href="#pb" x="1611" y="509"/>
<use href="#tr" x="1585" y="528"/><use href="#lk" x="1598" y="528"/><use href="#pb" x="1611" y="528"/>
<use href="#tr" x="1585" y="547"/><use href="#lk" x="1598" y="547"/><use href="#pb" x="1611" y="547"/>
<use href="#tr" x="1585" y="566"/><use href="#lk" x="1598" y="566"/><use href="#pb" x="1611" y="566"/>
<use href="#td" x="1585" y="585"/><use href="#pl" x="1598" y="585"/><use href="#pg" x="1611" y="585"/>
<path d="M1626 606a5 5 0 0 1 1-8 6 6 0 0 1 11 1 4 4 0 0 1 0 7" fill="none" stroke="#4db4e8" stroke-width="1.200"/><path d="M1629 604h4v3l-2 2-2-2zM1631 609v3" fill="none" stroke="#4db4e8"/>
<use href="#tr" x="1603" y="623"/><use href="#pl" x="1616" y="623"/><path d="M1636 616a3.500 3.500 0 0 0-3 5l-7 8 2 2 8-7a3.500 3.500 0 0 0 5-4l-3 2-2-1v-2z" fill="#c8c8c8"/>
<use href="#tr" x="1603" y="642"/><rect x="1623" y="640" width="5" height="5" fill="none" stroke="#bbb"/><rect x="1630" y="643" width="6" height="5" fill="#bbb"/><rect x="1633" y="637" width="5" height="5" fill="none" stroke="#bbb"/><path d="M1628 642h2M1635 642v1" stroke="#bbb"/>
<use href="#td" x="1604" y="661"/><path d="M1623 654h6l2 2h7v11h-15z" fill="#dcb67a" stroke="#b99a5c"/><path d="M1625 658h11v7h-11z" fill="#3a3020"/>
<use href="#pl" x="1634" y="680"/><use href="#pl" x="1634" y="699"/><use href="#pl" x="1634" y="718"/><use href="#pl" x="1634" y="737"/><use href="#pl" x="1634" y="756"/>
<use href="#td" x="1604" y="775"/><use href="#pl" x="1616" y="775"/><use href="#doc" x="1629" y="772"/><circle cx="1627" cy="778" r="5" fill="#3c8fe0"/><path d="M1622 778h10M1627 773v10" stroke="#1f1f1f" stroke-width=".6"/>
<use href="#tr" x="1622" y="794"/><use href="#pl" x="1634" y="794"/><use href="#doc" x="1648" y="795"/><path d="M1640 788h5M1643 786l2 2-2 2" fill="none" stroke="#4da6ff"/>
<use href="#tr" x="1622" y="813"/><use href="#pl" x="1634" y="813"/><use href="#doc" x="1648" y="814"/><path d="M1640 807h5M1643 805l2 2-2 2" fill="none" stroke="#4da6ff"/>
<use href="#pl" x="1616" y="832"/><use href="#wdoc" x="1629" y="832"/>
<use href="#tr" x="1603" y="851"/><use href="#pl" x="1616" y="851"/>
<use href="#tr" x="1603" y="870"/><use href="#pl" x="1616" y="870"/>
<use href="#tr" x="1603" y="889"/><use href="#pl" x="1616" y="889"/><use href="#wdoc" x="1629" y="889"/>
<use href="#tr" x="1567" y="908"/><path d="M1587 902h6l2 2h7v11h-15z" fill="#dcb67a" stroke="#b99a5c"/><path d="M1589 906h11v7h-11z" fill="#3a3020"/>
<use href="#tr" x="1567" y="925"/><path d="M1587 921h6l2 2h7v4h-15z" fill="#dcb67a"/>
</g>
<!-- status right -->
<circle cx="1535" cy="973" r="3.500" fill="none" stroke="#fff"/><path d="M1535 965v4M1535 977v4" stroke="#fff"/>
<path d="M1568 975l3.500-4 3.500 4z" fill="#fff"/><path d="M1718 975l3.500-4 3.500 4z" fill="#fff"/><path d="M1861 975l3.500-4 3.500 4z" fill="#fff"/>
<path d="M1601 980l1-4 8-9 3 2-8 9z" fill="none" stroke="#fff"/>
<circle cx="1657" cy="968" r="2.500" fill="none" stroke="#fff"/><circle cx="1657" cy="979" r="2.500" fill="none" stroke="#fff"/><circle cx="1667" cy="968" r="2.500" fill="none" stroke="#fff"/><path d="M1657 971v5M1667 971c0 4-8 3-9 6" fill="none" stroke="#fff"/>
<path d="M1754 966h14v3h-14zM1756 969v11h10v-11M1759 972v5h4v-5" fill="none" stroke="#fff"/>
<path d="M1889 979h12M1891 979v-7a4 4 0 0 1 8 0v7" fill="none" stroke="#fff"/><circle cx="1901" cy="979" r="5.500" fill="#f05a6a"/>

<!-- taskbar icons -->
<g>
<rect x="64" y="998" width="11" height="11" fill="#3db8ee"/><rect x="76" y="998" width="11" height="11" fill="#28a8e8"/><rect x="64" y="1010" width="11" height="11" fill="#0f8fe0"/><rect x="76" y="1010" width="11" height="11" fill="#0b7fd8"/>
<rect x="108" y="1005" width="17" height="17" fill="#222"/><rect x="114" y="998" width="18" height="18" fill="#f4f4f4"/><rect x="114" y="1005" width="11" height="11" fill="#aaa"/>
<rect x="152" y="1000" width="24" height="20" fill="#0c68c0"/><path d="M152 1014l5-6 3 3 3-5 3 5 4-3 6 5v7h-24z" fill="#9ed4f2"/>
<rect x="197" y="998" width="21" height="21" fill="#1a9ae8"/><circle cx="208" cy="1008" r="6.500" fill="#9ed4f2" stroke="#0e70c0" stroke-width="1.500"/><path d="M213 1014l6 6" stroke="#0e70c0" stroke-width="2"/>
<path d="M252 997l11 4v9c0 6-5 10-11 13-6-3-11-7-11-13v-9z" fill="#1987d8"/><path d="M252 1009h11v1c0 6-5 10-11 13z" fill="#0e5ea8"/><path d="M241 1001l11-4v12h-11z" fill="#33aaea"/>
<circle cx="296" cy="1009" r="10" fill="#a80e0e"/><circle cx="296" cy="1009" r="12" fill="none" stroke="#a80e0e" stroke-width="3" stroke-dasharray="3 3"/><path d="M291 1002h6M291 1002v13M291 1008h5M296 1006h6l-5 9h6" fill="none" stroke="#fff" stroke-width="1.300"/>
<rect x="329" y="1000" width="23" height="19" rx="1" fill="#2c2c2c"/><rect x="329" y="1000" width="23" height="4" fill="#666"/><path d="M332 1007l4 3-4 3" fill="none" stroke="#eee" stroke-width="1.500"/><path d="M338 1014h6" stroke="#eee" stroke-width="1.500"/>
<path d="M372 998h9l2 3h13v20h-24z" fill="#e7ad1c"/><rect x="372" y="1003" width="24" height="18" fill="#fbd355"/><rect x="377" y="1012" width="14" height="9" rx="1" fill="#0e74c8"/>
<path d="M428 997c6 1 11 6 11 12a11 11 0 0 1-22 0c0-3 1-6 3-8 0 2 1 3 2 3 1-3 3-6 6-7z" fill="#ff7a1a"/><path d="M431 998c4 2 8 5 8 11 0 6-4 10-9 11 5-3 6-9 3-13z" fill="#fcc52e"/><circle cx="428" cy="1010" r="5" fill="#6a3fc9"/><path d="M420 1010a8 8 0 0 0 12 8c-5 0-9-3-12-8z" fill="#e03a6c"/>
<rect x="420" y="1025" width="16" height="3" rx="1.500" fill="#0b6fc8"/>
<rect x="464" y="999" width="17" height="21" fill="#3aa9d8"/><path d="M464 1021h17v2h-17z" fill="#a04020"/><path d="M467 1005h11M467 1009h11M467 1013h11M467 1017h11" stroke="#0b5c86"/><path d="M466 997v3M470 997v3M474 997v3M478 997v3" stroke="#0b5c86"/>
<rect x="506" y="998" width="18" height="24" fill="#e8e8e8" stroke="#999"/><rect x="507" y="1010" width="16" height="11" fill="#7ac232"/><path d="M510 1002v7M513 1005h5" stroke="#333"/><path d="M520 1010l7-12" stroke="#c89030" stroke-width="2"/>
<ellipse cx="560" cy="1010" rx="8" ry="6" fill="#e8b820"/><circle cx="560" cy="1010" r="3.500" fill="none" stroke="#b02020"/><path d="M550 1002l3 3M555 1000l1 3M565 1000l-1 3M570 1002l-3 3" stroke="#e88020" stroke-width="1.500"/>
<ellipse cx="604" cy="1008" rx="10" ry="7" fill="#6a6a60"/><circle cx="598" cy="1007" r="3" fill="#fff"/><circle cx="605" cy="1007" r="3" fill="#fff"/><circle cx="598" cy="1007" r="1.300" fill="#111"/><circle cx="605" cy="1007" r="1.300" fill="#111"/><path d="M612 1003l3-5-1 8zM606 1014l8 4 1 2-2-1-8-2z" fill="#5c5c50"/>
<path d="M639 997h14l5 5v20h-19z" fill="#eaeaea" stroke="#777" stroke-width="1.500"/><path d="M653 997v5h5z" fill="#999"/>
<path d="M680 1003l4 3 5 4 7-11 8-3v26l-8-3-7-11-5 4-4 3z" fill="#6b4fbf"/><path d="M696 999l8-3v26l-8-3z" fill="#b28fe8"/><path d="M680 1003l5 2v8l-5 2z" fill="#8a6ad8"/>
<path d="M745 996l-13 11-6-5-3 2v10l3 2 6-5 13 11 4-2v-22z" fill="#1e8fdd"/><path d="M745 996l4 2v22l-4 2z" fill="#0a6fbf"/><path d="M745 1003l-8 6 8 6z" fill="#bdeeee"/>
<path d="M782 996l5 4-5 6-5-6z" fill="#e87a7a"/><path d="M770 1005l5 4-5 6-5-6z" fill="#8ab4f0"/><path d="M790 1005l5 4-5 6-5-6z" fill="#7ac27a"/><path d="M780 1014l6 4-6 6-6-6z" fill="#f0d880"/>
<circle cx="824" cy="1009" r="12" fill="#dc4438"/><path d="M824 1009l-10.400 6A12 12 0 0 0 824 1021z" fill="#1ea361"/><path d="M824 1009h12a12 12 0 0 1-12 12l-4-7z" fill="#fcc934"/><circle cx="824" cy="1009" r="5.500" fill="#fff"/><circle cx="824" cy="1009" r="4.300" fill="#4285f4"/>
<rect x="861" y="1007" width="14" height="12" rx="1" fill="#bbb" stroke="#555"/><path d="M864 1007v-3a4 4 0 0 1 8 0v3" fill="none" stroke="#666" stroke-width="2"/><path d="M856 997v8l2-2 4 3 2-3-3-3 2-3z" fill="#3c9ae8"/><path d="M880 1021v-8l-2 2-4-3-2 3 3 3-2 3z" fill="#5ebf3c"/>
<ellipse cx="912" cy="1015" rx="9" ry="6" fill="#f0c020"/><circle cx="912" cy="1004" r="5" fill="#f0c020"/><circle cx="912" cy="1005" r="2.500" fill="#d87820"/>
<rect x="961" y="1000" width="9" height="20" fill="#aaa"/><circle cx="955" cy="1006" r="8" fill="#3c8fd8"/><path d="M950 1003l6-3 3 6-6 4z" fill="#5ebf3c"/><path d="M947 1003l6-5 3 2-7 4z" fill="#f0c020"/>
<path d="M992 999c4-2 6-1 8 0 3-1 6-2 9 0 2 3 0 8-3 10v8c-2 3-5 2-5-1 0-2-1-3-2-1l-1 3c-2 1-3-2-3-6-3 0-5-3-5-6s1-6 2-7z" fill="#3a6ea5"/><path d="M1001 1000v14" stroke="#fff" stroke-width=".7"/>
<rect x="1033" y="997" width="23" height="24" rx="2" fill="#16466e"/><path d="M1038 1000c4 2 7 7 8 11 1 3 5 5 6 7M1040 1006c3 2 5 2 8 1" fill="none" stroke="#b8cfe0" stroke-width=".8"/>
</g>
<g fill="#5a6468"><ellipse cx="164" cy="1027" rx="3" ry="1.300"/><ellipse cx="296" cy="1027" rx="3" ry="1.300"/><ellipse cx="340" cy="1027" rx="3" ry="1.300"/><ellipse cx="384" cy="1027" rx="3" ry="1.300"/><ellipse cx="472" cy="1027" rx="3" ry="1.300"/><ellipse cx="516" cy="1027" rx="3" ry="1.300"/><ellipse cx="692" cy="1027" rx="3" ry="1.300"/><ellipse cx="956" cy="1027" rx="3" ry="1.300"/></g>
<path d="M1742 1012l5-5 5 5" fill="none" stroke="#222" stroke-width="1.300"/>
<path d="M1771 1005a11 11 0 0 1 15 0M1774 1008a7 7 0 0 1 9 0M1776 1011a3.500 3.500 0 0 1 5 0" fill="none" stroke="#222" stroke-width="1.200"/><circle cx="1778.500" cy="1014" r="1.200" fill="#222"/>
<path d="M1797 1006h3l3-3v12l-3-3h-3z" fill="none" stroke="#222"/><circle cx="1807" cy="1012" r="4" fill="#222"/><path d="M1805 1010l4 4M1809 1010l-4 4" stroke="#fff"/>
<rect x="1820" y="1004" width="14" height="10" fill="#222"/><path d="M1835 1007v4" stroke="#222" stroke-width="2"/><path d="M1823 1003l3-3v3z" fill="#222"/>
</svg>

<!-- TEXT -->
<div class="t" style="left:937px;top:14px;color:#f0f0f0;font-size:12.5px">Acer RDP</div>
<div class="t" style="left:72px;top:45px;font-size:12.5px;color:#222">Acer RDP</div>
<div class="t w" style="left:87px;top:81px">File</div><div class="t w" style="left:125px;top:81px">Edit</div>
<div class="t w" style="left:66px;top:138px">Process:</div><div class="t w" style="left:119px;top:138px">[1888]</div>
<div class="t d" style="left:55px;top:173px">Default.aspx.cs</div>
<div class="t w" style="left:52px;top:793px">100 %</div><div class="t w" style="left:150px;top:793px">N</div>
<div class="t w" style="left:75px;top:814px">Design</div><div class="t w" style="left:144px;top:814px">Sp</div>
<div class="t d" style="left:54px;top:845px">Autos</div><div class="t w" style="left:57px;top:867px">Search (Ctrl+E)</div>
<div class="t" style="left:64px;top:891px;color:#666">Name</div>
<div class="t w" style="left:55px;top:945px">Autos</div><div class="t d" style="left:98px;top:945px">Locals</div><div class="t d" style="left:143px;top:945px">W</div>
<div class="t" style="left:71px;top:973px;color:#fff">Ready</div>

<div class="t" style="left:251px;top:87px;color:#15141a">Product List (Classic ASP.NET)</div>
<div class="t" style="left:449px;top:129px;font-size:13px;color:#6e6e76;letter-spacing:.55px">http://<span style="color:#15141a">localhost</span>:61314</div>
<div class="t" style="left:1226px;top:129px;font-size:11px;color:#15141a">120%</div>

<!-- devtools tabs text -->
<div class="t" style="left:219px;top:627px">Inspector</div><div class="t" style="left:306px;top:627px">Console</div><div class="t" style="left:387px;top:627px">Debugger</div><div class="t" style="left:477px;top:627px;color:#0060df">Network</div><div class="t" style="left:560px;top:627px">Style Editor</div><div class="t" style="left:657px;top:627px">Performance</div><div class="t" style="left:762px;top:627px">Memory</div><div class="t" style="left:845px;top:627px">Storage</div><div class="t" style="left:923px;top:627px">Accessibility</div><div class="t" style="left:1026px;top:627px">Application</div>
<div class="t" style="left:1428px;top:627px">1</div>
<div class="t" style="left:213px;top:655px;color:#737373">Filter URLs</div>
<div class="t" style="left:927px;top:655px;color:#0060df">All</div><div class="t" style="left:954px;top:655px;color:#38383d">HTML</div><div class="t" style="left:996px;top:655px;color:#38383d">CSS</div><div class="t" style="left:1029px;top:655px;color:#38383d">JS</div><div class="t" style="left:1052px;top:655px;color:#38383d">XHR</div><div class="t" style="left:1088px;top:655px;color:#38383d">Fonts</div><div class="t" style="left:1131px;top:655px;color:#38383d">Images</div><div class="t" style="left:1181px;top:655px;color:#38383d">Media</div><div class="t" style="left:1227px;top:655px;color:#38383d">WS</div><div class="t" style="left:1258px;top:655px;color:#38383d">Other</div>
<div class="t" style="left:1328px;top:655px;color:#38383d">Disable Cache</div><div class="t" style="left:1413px;top:655px;color:#38383d">No Throttling</div>
<svg class="b" style="left:1484px;top:649px" width="8" height="13"><path d="M4 0 7 4H1zM4 13 1 9H7z" fill="#444"/></svg>
<div class="t" style="left:162px;top:683px;color:#333">Status</div><div class="t" style="left:217px;top:683px;color:#333">Method</div><div class="t" style="left:271px;top:683px;color:#333">Domain</div><div class="t" style="left:395px;top:683px;color:#333">File</div><div class="t" style="left:669px;top:683px;color:#333">Initiator</div><div class="t" style="left:779px;top:683px;color:#333">Type</div><div class="t" style="left:833px;top:683px;color:#333">Transferred</div><div class="t" style="left:943px;top:683px;color:#333">Size</div>
<div class="t" style="left:1016px;top:683px">Headers</div><div class="t" style="left:1081px;top:683px">Cookies</div><div class="t" style="left:1145px;top:683px">Request</div><div class="t" style="left:1209px;top:683px;color:#0060df">Response</div><div class="t" style="left:1280px;top:683px">Timings</div><div class="t" style="left:1345px;top:683px">Stack Trace</div>

<!-- rows -->
<div class="st" style="top:701px;background:#058b00">200</div><div class="t" style="left:217px;top:707px">GET</div><div class="t" style="left:286px;top:707px">localhost:61314</div><div class="t f" style="left:395px;top:707px">/</div><div class="t" style="left:669px;top:707px">document</div><div class="t" style="left:779px;top:707px">html</div><div class="t" style="left:833px;top:707px">2.52 kB</div><div class="t" style="left:943px;top:707px">5.10...</div>
<div class="st" style="top:725px;color:#777">304</div><div class="t g" style="left:217px;top:731px">GET</div><div class="t g" style="left:286px;top:731px">localhost:61314</div><div class="t f g" style="left:395px;top:731px">jquery-1.6.4.min.js</div><div class="t g" style="left:669px;top:731px">script</div><div class="t g" style="left:779px;top:731px">js</div><div class="t g" style="left:833px;top:731px">cached</div><div class="t g" style="left:943px;top:731px">91.6...</div>
<div class="st" style="top:749px;color:#777">304</div><div class="t g" style="left:217px;top:755px">GET</div><div class="t g" style="left:286px;top:755px">localhost:61314</div><div class="t f g" style="left:395px;top:755px">jquery.signalR-2.4.3.min.js</div><div class="t g" style="left:669px;top:755px">script</div><div class="t g" style="left:779px;top:755px">js</div><div class="t g" style="left:833px;top:755px">cached</div><div class="t g" style="left:943px;top:755px">0 B</div>
<div class="st" style="top:773px;background:#058b00">200</div><div class="t" style="left:217px;top:779px">GET</div><div class="t" style="left:286px;top:779px">localhost:61314</div><div class="t f" style="left:395px;top:779px">hubs</div><div class="t" style="left:669px;top:779px">script</div><div class="t" style="left:779px;top:779px">js</div><div class="t" style="left:833px;top:779px">4.01 kB</div><div class="t" style="left:943px;top:779px">3.53...</div>
<div class="st" style="top:797px;background:#cd6ce6">404</div><div class="t g" style="left:217px;top:803px">GET</div><div class="t g" style="left:286px;top:803px">localhost:61314</div><div class="t f g" style="left:395px;top:803px">favicon.ico</div><div class="t u" style="left:669px;top:803px">FaviconLoader.sy...</div><div class="t g" style="left:779px;top:803px">html</div><div class="t g" style="left:833px;top:803px">cached</div><div class="t g" style="left:943px;top:803px">4.84...</div>
<div class="st" style="top:820px;background:#058b00;border:1px solid #fff;line-height:12px;height:14px">200</div><div class="t" style="left:217px;top:827px;color:#fff">GET</div><div class="t" style="left:286px;top:827px;color:#fff">localhost:61314</div><div class="t f" style="left:395px;top:827px;color:#fff">negotiate?clientProtocol=2.1&amp;connectionData=[{"name":"producthub"}]</div><div class="t" style="left:669px;top:827px;color:#fff;text-decoration:underline">jquery-1.6.4.min.j...</div><div class="t" style="left:779px;top:827px;color:#fff">json</div><div class="t" style="left:833px;top:827px;color:#fff">872 B</div><div class="t" style="left:943px;top:827px;color:#fff">391 B</div>
<div class="st" style="top:845px;background:#0074e8">101</div><div class="t" style="left:217px;top:851px">GET</div><div class="t" style="left:286px;top:851px">localhost:61314</div><div class="t f" style="left:395px;top:851px">connect?transport=webSockets&amp;clientProtocol=2.1&amp;connectionToken</div><div class="t u" style="left:669px;top:851px">jquery.signalR-2....</div><div class="t" style="left:779px;top:851px">plain</div><div class="t" style="left:833px;top:851px">431 B</div><div class="t" style="left:943px;top:851px">0 B</div>
<div class="st" style="top:869px;background:#058b00">200</div><div class="t" style="left:217px;top:875px">GET</div><div class="t" style="left:286px;top:875px">localhost:61314</div><div class="t f" style="left:395px;top:875px">start?transport=webSockets&amp;clientProtocol=2.1&amp;connectionToken</div><div class="t u" style="left:669px;top:875px">jquery-1.6.4.min.j...</div><div class="t" style="left:779px;top:875px">json</div><div class="t" style="left:833px;top:875px">502 B</div><div class="t" style="left:943px;top:875px">25 B</div>

<div class="t" style="left:194px;top:972px;color:#333">8 requests</div><div class="t" style="left:269px;top:972px;color:#333">105.55 kB / 8.33 kB transferred</div><div class="t" style="left:446px;top:972px;color:#333">Finish: 1.05 s</div><div class="t" style="left:540px;top:972px;color:#333">DOMContentLoaded: 872 ms</div><div class="t" style="left:716px;top:972px;color:#333">load: 887 ms</div>

<div class="t" style="left:1000px;top:707px;color:#737373">Filter properties</div>
<div class="t" style="left:981px;top:732px">JSON</div><div class="t" style="left:1468px;top:732px">Raw</div>
<div class="t k" style="left:997px;top:755px">Url: <span class="v">"/signalr"</span></div>
<div class="t k" style="left:997px;top:775px">ConnectionToken: <span class="v">"Zzvi+/</span></div>
<div class="t v" style="left:1094px;top:791px;font-size:11px;letter-spacing:-.12px">koVA2VL6nseHappdvca6ykoTTE7xkBu0ZV8RAdVeJhM3NQBxvG+8Rbs6C5DcuukP5D</div>
<div class="t v" style="left:1094px;top:807px;font-size:11px;letter-spacing:-.12px">WH+1+RE9BTEjLFpSbDEP9UNra4OIYTbV8jA3FpNYhHKsr6bn6MjVT0Mt"</div>
<div class="t k" style="left:997px;top:827px">ConnectionId: <span class="v">"a2525087-d8e7-4ef8-bf9b-52efb699b0ba"</span></div>
<div class="t k" style="left:997px;top:847px">KeepAliveTimeout: <span class="e">20.0</span><span class="bd"><b>JS:</b> 20</span></div>
<div class="t k" style="left:997px;top:867px">DisconnectTimeout: <span class="e">30.0</span><span class="bd"><b>JS:</b> 30</span></div>
<div class="t k" style="left:997px;top:888px">ConnectionTimeout: <span class="e">110.0</span><span class="bd"><b>JS:</b> 110</span></div>
<div class="t k" style="left:997px;top:909px">TryWebSockets: <span class="e">true</span></div>
<div class="t k" style="left:997px;top:929px">ProtocolVersion: <span class="v">"2.0"</span></div>
<div class="t k" style="left:997px;top:949px">TransportConnectTimeout: <span class="e">5.0</span><span class="bd"><b>JS:</b> 5</span></div>
<div class="t k" style="left:997px;top:969px">LongPollDelay: <span class="e">0.0</span><span class="bd"><b>JS:</b> 0</span></div>

<!-- VS right text -->
<div class="t" style="left:1756px;top:81px;font-size:9px;color:#e8d8ea;transform:translate(-50%,-50%)">AL</div>
<div class="t w" style="left:1779px;top:112px">GitHub Copilot</div>
<div class="t d" style="left:1558px;top:172px">Solution Explorer</div>
<div class="t w" style="left:1561px;top:221px">Search Solution Explorer (Ctrl+;)</div>
<div class="t r" style="left:1625px;top:243px">ProductService.AjaxCRUD</div>
<div class="t r" style="left:1625px;top:262px">ProductService.Angular</div>
<div class="t r" style="left:1625px;top:281px">ProductService.AngularTyped</div>
<div class="t r" style="left:1625px;top:300px">ProductService.AngularTypedCRUD</div>
<div class="t r" style="left:1625px;top:319px">ProductService.AsmxWebMethod</div>
<div class="t r" style="left:1625px;top:338px">ProductService.AsmxWebMethodCRUD</div>
<div class="t r" style="left:1625px;top:357px">ProductService.Blazor</div>
<div class="t r" style="left:1625px;top:376px">ProductService.BlazorCRUD</div>
<div class="t r" style="left:1625px;top:395px">ProductService.Classic</div>
<div class="t r" style="left:1625px;top:414px">ProductService.ClassicCRUD</div>
<div class="t r" style="left:1625px;top:433px">ProductService.Js</div>
<div class="t r" style="left:1625px;top:452px">ProductService.JsCRUD</div>
<div class="t r" style="left:1625px;top:471px">ProductService.Mvc</div>
<div class="t r" style="left:1625px;top:490px">ProductService.MvcCRUD</div>
<div class="t r" style="left:1625px;top:509px">ProductService.Razor</div>
<div class="t r" style="left:1625px;top:528px">ProductService.RazorCRUD</div>
<div class="t r" style="left:1625px;top:547px">ProductService.SignalrNew</div>
<div class="t r" style="left:1625px;top:566px">ProductService.SignalrNewCRUD</div>
<div class="t r" style="left:1625px;top:585px">ProductService.SignalrOld</div>
<div class="t r" style="left:1643px;top:604px">Connected Services</div>
<div class="t r" style="left:1643px;top:623px">Properties</div>
<div class="t r" style="left:1643px;top:642px">References</div>
<div class="t r" style="left:1643px;top:661px">Scripts</div>
<div class="t" style="left:1642px;top:680px;font-size:10.500px;font-weight:bold;color:#cf7c45">JS</div><div class="t r" style="left:1661px;top:680px">jquery-1.6.4-vsdoc.js</div>
<div class="t" style="left:1642px;top:699px;font-size:10.500px;font-weight:bold;color:#cf7c45">JS</div><div class="t r" style="left:1661px;top:699px">jquery-1.6.4.js</div>
<div class="t" style="left:1642px;top:718px;font-size:10.500px;font-weight:bold;color:#cf7c45">JS</div><div class="t r" style="left:1661px;top:718px">jquery-1.6.4.min.js</div>
<div class="t" style="left:1642px;top:737px;font-size:10.500px;font-weight:bold;color:#cf7c45">JS</div><div class="t r" style="left:1661px;top:737px">jquery.signalR-2.4.3.js</div>
<div class="t" style="left:1642px;top:756px;font-size:10.500px;font-weight:bold;color:#cf7c45">JS</div><div class="t r" style="left:1661px;top:756px">jquery.signalR-2.4.3.min.js</div>
<div class="t r" style="left:1643px;top:775px">Default.aspx</div>
<div class="t r" style="left:1661px;top:794px">Default.aspx.cs</div>
<div class="t r" style="left:1661px;top:813px">Default.aspx.designer.cs</div>
<div class="t r" style="left:1643px;top:832px">packages.config</div>
<div class="t" style="left:1622px;top:851px;font-size:11.500px;font-weight:bold;color:#6cc24a">C#</div><div class="t r" style="left:1643px;top:851px">ProductHub.cs</div>
<div class="t" style="left:1622px;top:870px;font-size:11.500px;font-weight:bold;color:#6cc24a">C#</div><div class="t r" style="left:1643px;top:870px">Startup.cs</div>
<div class="t r" style="left:1643px;top:889px">Web.config</div>
<div class="t r" style="left:1608px;top:908px">Starter</div>
<div class="t d" style="left:1559px;top:937px">Test Expl...</div><div class="t d" style="left:1628px;top:937px">GitHub...</div><div class="t w" style="left:1697px;top:937px">Solution...</div><div class="t d" style="left:1766px;top:937px">Git Chan...</div><div class="t d" style="left:1835px;top:937px">Properties</div>
<div class="t" style="left:1898px;top:793px;color:#ddd">F</div>

<div class="t" style="left:1549px;top:973px;color:#fff">72</div><div class="t" style="left:1620px;top:973px;color:#fff">76</div><div class="t" style="left:1675px;top:973px;color:#fff">master</div><div class="t" style="left:1775px;top:973px;color:#fff">ProductService</div>
<div class="t" style="left:1899px;top:980px;color:#400;font-size:9px">1</div>

<div class="t" style="right:20px;left:auto;top:1000px;color:#2a3a3a;font-size:12px;text-align:right">5:41 PM</div>
<div class="t" style="right:20px;left:auto;top:1016px;color:#2a3a3a;font-size:12px;text-align:right">8/6/2025</div>

<div class="t" style="left:1602px;top:909px;font-size:20px;color:rgba(190,190,190,.55)">Activate Windows</div>
<div class="t" style="left:1602px;top:932px;font-size:15px;color:rgba(190,190,190,.55)">Go to Settings to activate Windows.</div>
</body></html>
